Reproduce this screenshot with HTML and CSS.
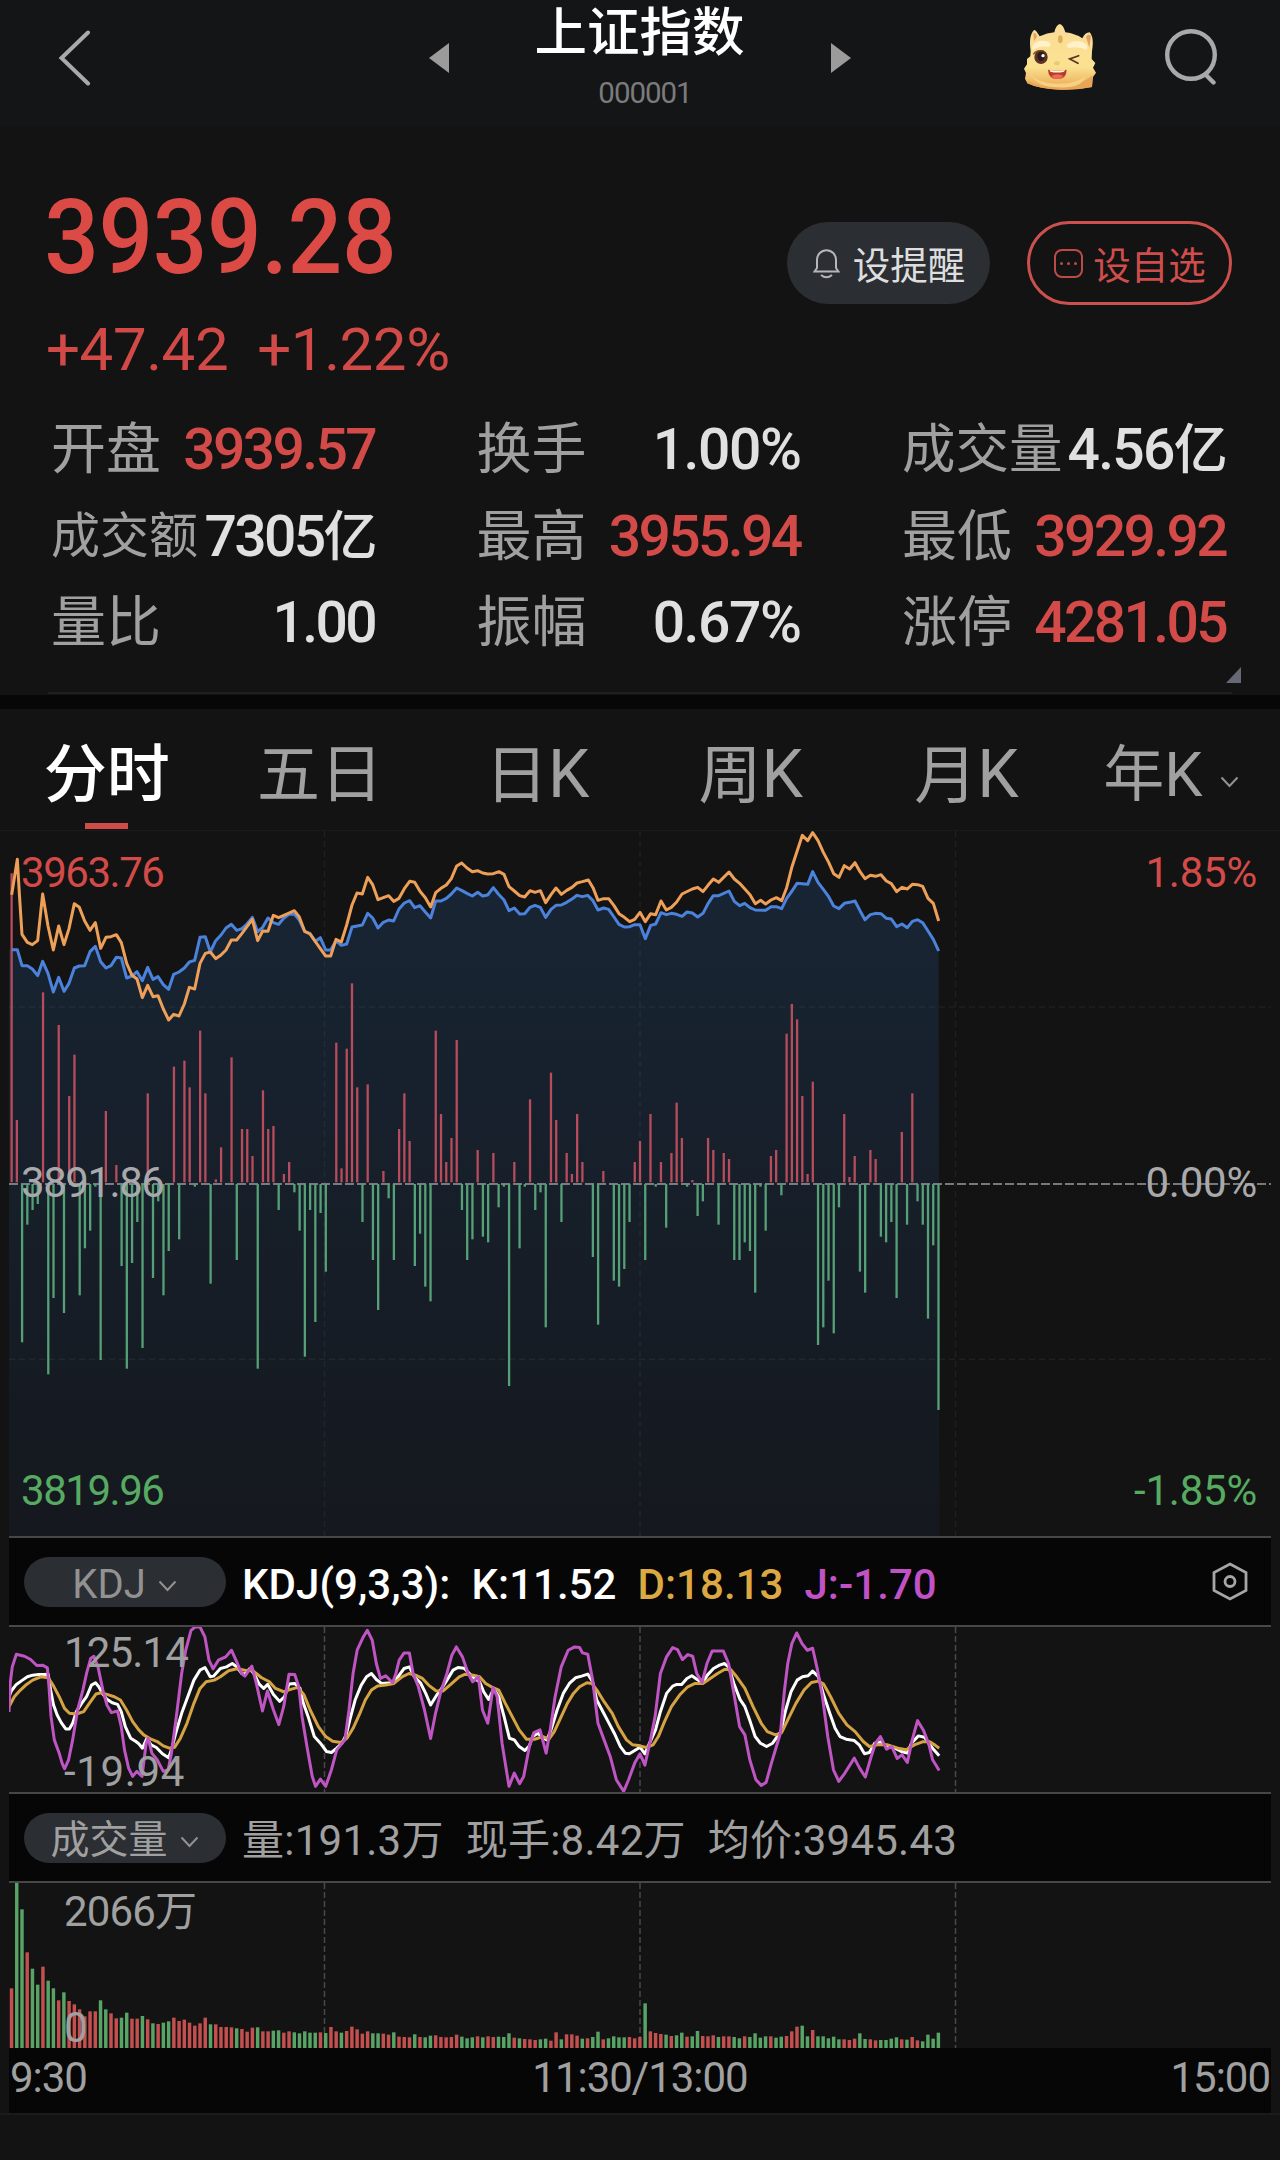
FILE: index.html
```html
<!DOCTYPE html>
<html lang="zh-CN">
<head>
  <meta charset="UTF-8">
  <title>上证指数</title>
  <meta name="viewport" content="width=device-width, initial-scale=1.0">
  <link rel="stylesheet" href="styles.css">
</head>
<body>

<!-- Header -->
<header class="header">
  <svg class="back" width="33" height="56" viewBox="0 0 33 56"><path d="M30 2.500L3.500 28L30 53.500"/></svg>
  <div class="stock">
    <svg width="20" height="30" viewBox="0 0 20 30"><path d="M20 0V30L0 15Z"/></svg>
    <div class="stock-name">
      <h1>上证指数</h1>
      <div class="code">000001</div>
    </div>
    <svg width="20" height="30" viewBox="0 0 20 30"><path d="M0 0V30L20 15Z"/></svg>
  </div>
  <div class="header-actions">
    <svg width="72" height="66" viewBox="72 69 216 198">
      <defs>
        <linearGradient id="face" x1="0" y1="0" x2="0" y2="1">
          <stop offset="0" stop-color="#f9dc98"/>
          <stop offset="0.65" stop-color="#fbe290"/>
          <stop offset="1" stop-color="#e8a552"/>
        </linearGradient>
      </defs>
      <path fill="url(#face)" d="M92 150Q86 110 98 92Q103 82 110 92L119 106Q142 95 163 94Q168 71 180 69Q190 72 196 94Q226 98 247 112Q255 94 269 94Q283 110 276 150L275 174L286 186L279 200L288 215L279 228L276 258Q230 268 180 266Q120 265 82 247L75 233L78 216L72 203L81 190L81 174L91 166Z"/>
      <path fill="#e9a556" d="M82 238Q120 262 175 256Q245 255 277 222L276 258Q230 268 180 266Q120 265 82 247Z"/>
      <path fill="#f7d183" d="M90 219Q118 250 174 248Q235 248 259 221Q250 262 174 259Q112 259 90 219Z"/>
      <path fill="#dfa168" d="M100 98Q107 92 111 107L102 120ZM258 108Q266 94 273 106L268 140Z"/>
      <ellipse cx="181" cy="115" rx="7" ry="12" fill="#dcae59"/>
      <path fill="#fff1c9" d="M96 137Q111 112 146 122Q157 132 147 138Q115 133 98 149ZM203 129Q227 113 253 126Q267 135 260 147Q234 134 207 141Q198 137 203 129Z"/>
      <ellipse cx="123" cy="168" rx="20" ry="21" fill="#5b3324"/>
      <ellipse cx="123" cy="166" rx="11" ry="14" fill="#2a1a18"/>
      <path d="M100 160Q110 145 130 150" fill="none" stroke="#7a4a2c" stroke-width="4"/>
      <circle cx="129" cy="164" r="5" fill="#fff"/>
      <ellipse cx="171" cy="187" rx="9" ry="6" fill="#edc875"/>
      <path d="M236 164L209 174L234 187" fill="none" stroke="#55311f" stroke-width="5" stroke-linecap="round"/>
      <path fill="#b93a2c" d="M144 206Q172 212 200 206Q200 234 172 234Q145 234 144 206Z"/>
      <path fill="#ee6b50" d="M154 225Q172 214 190 225Q184 234 172 234Q160 234 154 225Z"/>
      <path fill="#fff3e2" d="M149 207Q172 212 195 207L192 212Q172 217 151 212Z"/>
    </svg>
    <svg class="search" width="52" height="56" viewBox="0 0 52 56"><circle cx="26" cy="26" r="23.800"/><path d="M41 46L48.500 53.500"/></svg>
  </div>
</header>

<!-- Quote -->
<section class="quote">
  <div class="quote-top">
    <div>
      <div class="price">3939.28</div>
      <div class="change"><span>+47.42</span><span>+1.22%</span></div>
    </div>
    <div class="quote-buttons">
      <button class="pill-button">
        <svg width="27" height="31" viewBox="0 0 27 31"><path d="M1.500 23.500H25.500L23 20V12A9.500 9.800 0 0 0 4 12V20Z"/><path d="M8 27Q13.500 31.500 19 27"/></svg>
        设提醒
      </button>
      <button class="pill-button outlined">
        <svg width="29" height="29" viewBox="0 0 29 29"><rect x="1" y="1" width="27" height="27" rx="7"/><path class="dots" d="M7.500 14.500h.01M14.500 14.500h.01M21.500 14.500h.01"/></svg>
        设自选
      </button>
    </div>
  </div>

  <div class="stats">
    <div class="stat"><span class="label">开盘</span><span class="value up">3939.57</span></div>
    <div class="stat"><span class="label">换手</span><span class="value percent">1.00%</span></div>
    <div class="stat"><span class="label medium">成交量</span><span class="value amount">4.56<i>亿</i></span></div>
    <div class="stat"><span class="label small">成交额</span><span class="value">7305<i>亿</i></span></div>
    <div class="stat"><span class="label">最高</span><span class="value up">3955.94</span></div>
    <div class="stat"><span class="label">最低</span><span class="value up">3929.92</span></div>
    <div class="stat"><span class="label">量比</span><span class="value">1.00</span></div>
    <div class="stat"><span class="label">振幅</span><span class="value percent">0.67%</span></div>
    <div class="stat"><span class="label">涨停</span><span class="value up">4281.05</span></div>
  </div>
  <div class="expand"><svg width="15" height="16" viewBox="0 0 15 16"><path d="M15 0V16H0Z"/></svg></div>
</section>

<!-- Period tabs -->
<nav class="tabs">
  <div class="tab active">分时</div>
  <div class="tab">五日</div>
  <div class="tab day">日<b>K</b></div>
  <div class="tab day">周<b>K</b></div>
  <div class="tab month">月<b>K</b></div>
  <div class="tab last">年<b>K</b><svg class="caret" width="19" height="12" viewBox="0 0 19 12"><path d="M1.500 1.500L9.500 10L17.500 1.500"/></svg></div>
</nav>

<main class="charts">
  <!-- Intraday chart -->
  <div class="chart chart-price">
    <svg id="priceChart" viewBox="27 33 3786 2115" preserveAspectRatio="none"></svg>
    <span class="mark top left up">3963.76</span>
    <span class="mark top right up">1.85%</span>
    <span class="mark middle left">3891.86</span>
    <span class="mark middle right">0.00%</span>
    <span class="mark bottom left down">3819.96</span>
    <span class="mark bottom right down">-1.85%</span>
  </div>

  <!-- KDJ -->
  <div class="bar">
    <div class="selector">KDJ <svg class="caret" width="19" height="12" viewBox="0 0 19 12"><path d="M1.500 1.500L9.500 10L17.500 1.500"/></svg></div>
    <div class="readout kdj">
      <span>KDJ(9,3,3):</span><span>K:11.52</span><span class="gold">D:18.13</span><span class="pink">J:-1.70</span>
    </div>
    <svg class="settings" width="36" height="39" viewBox="0 0 36 39"><path d="M18 2L34 10.500V28.500L18 37L2 28.500V10.500Z"/><circle cx="18" cy="19.500" r="5"/></svg>
  </div>
  <div class="chart chart-sub">
    <svg id="kdjChart" viewBox="22 290 3092 497" preserveAspectRatio="none"></svg>
    <span class="mark sub-top">125.14</span>
    <span class="mark sub-bottom">-19.94</span>
  </div>

  <!-- Volume -->
  <div class="bar">
    <div class="selector volume">成交量 <svg class="caret" width="19" height="12" viewBox="0 0 19 12"><path d="M1.500 1.500L9.500 10L17.500 1.500"/></svg></div>
    <div class="readout volume">
      <span>量:191.3万</span><span>现手:8.42万</span><span>均价:3945.43</span>
    </div>
  </div>
  <div class="chart chart-sub">
    <svg id="volumeChart" viewBox="0 0 241 495" preserveAspectRatio="none"></svg>
    <span class="mark sub-top volume">2066万</span>
    <span class="mark sub-bottom">0</span>
  </div>
  <div class="axis"><span>9:30</span><span>11:30/13:00</span><span>15:00</span></div>
</main>
<footer class="footer"></footer>

<script src="charts.js"></script>
</body>
</html>
```

FILE: styles.css
```css
* {
  box-sizing: border-box;
}

body {
  margin: 0;
  width: 1280px;
  background: #131313;
  color: #a0a0a0;
  font-family: Roboto, "Noto Sans CJK SC", sans-serif;
}

svg {
  display: block;
  fill: none;
}

/* header */
.header {
  height: 126px;
  padding: 0 63px 11px 58px;
  background: #141517;
  display: grid;
  grid-template-columns: 1fr 423px 1fr;
  align-items: center;
}

.back {
  stroke: #a8a9ab;
  stroke-width: 4;
  stroke-linecap: round;
}

.stock {
  display: flex;
  justify-content: space-between;
  align-items: center;
  margin: 0 -2px 0 3px;
}

.stock svg {
  fill: #9b9b9b;
}

.stock-name {
  height: 115px;
  padding-top: 3px;
  text-align: center;
}

h1 {
  margin: 0 1px 0 0;
  font-size: 52.5px;
  line-height: 60px;
  font-weight: 500;
  color: #fff;
}

.code {
  margin-top: 15px;
  padding-left: 10px;
  font-size: 29.5px;
  line-height: 30px;
  letter-spacing: -0.035em;
  color: #7b7b7b;
}

.header-actions {
  display: flex;
  justify-content: flex-end;
  align-items: center;
  gap: 69px;
  padding-bottom: 1px;
}

.search {
  stroke: #a8a9ab;
  stroke-width: 4.4;
  stroke-linecap: round;
}

/* quote */
.quote {
  padding: 62px 48px 0 44px;
  height: 569px;
}

.quote-top {
  display: flex;
  justify-content: space-between;
}

.price {
  font-size: 103px;
  line-height: 100px;
  font-weight: 500;
  letter-spacing: -0.5px;
  color: #dc4a46;
  transform: scaleX(0.935);
  transform-origin: 4px 0;
}

.change {
  display: flex;
  gap: 29px;
  margin: 22px 0 0 2px;
  font-size: 60px;
  line-height: 80px;
  letter-spacing: -0.007em;
  color: #d24a47;
}

.quote-buttons {
  display: flex;
  gap: 36px;
  padding-top: 33px;
}

.pill-button {
  width: 205px;
  height: 84px;
  padding: 0 0 2px 1px;
  border: 1px solid #131313;
  border-radius: 42px;
  background: #2b2e33;
  color: #dedede;
  font: inherit;
  font-size: 37.5px;
  display: flex;
  justify-content: center;
  align-items: center;
  gap: 13px;
}

.pill-button svg {
  margin-top: 3px;
  stroke: #b5b6b8;
  stroke-width: 2;
}

.pill-button.outlined {
  background: none;
  border: 3px solid #cb504e;
  color: #cf4d4a;
  gap: 10px;
}

.pill-button.outlined svg {
  stroke: #bd4a48;
}

.pill-button .dots {
  stroke-width: 3;
  stroke-linecap: round;
}

.stats {
  display: grid;
  grid-template-columns: repeat(3, 324px);
  column-gap: 101.5px;
  margin: 17px 0 0 7px;
}

.stat {
  display: flex;
  justify-content: space-between;
  height: 86.5px;
  line-height: 85px;
  white-space: nowrap;
}

.label {
  font-size: 55px;
}

.label.medium {
  font-size: 53.5px;
}

.label.small {
  font-size: 49px;
}

.value {
  font-size: 57px;
  font-weight: 500;
  letter-spacing: -0.046em;
  color: #e0e0e0;
}

.value.percent {
  letter-spacing: -0.025em;
}

.value.amount {
  letter-spacing: -0.03em;
}

.value i {
  font-size: 54px;
  font-style: normal;
}

.up,
.value.up {
  color: #d24b49;
}

.down {
  color: #56aa61;
}

.expand {
  padding-bottom: 9px;
  margin-left: 4px;
  border-bottom: 2px solid #1f1f1f;
}

.expand svg {
  margin: 0 -9px 0 auto;
  fill: #666975;
}

/* tabs */
.tabs {
  display: flex;
  height: 136px;
  border-top: 14px solid #070707;
  border-bottom: 1px solid #1b1b1b;
}

.tab {
  width: 16.6667%;
  position: relative;
  padding-top: 26px;
  text-align: center;
  font-size: 63px;
  line-height: 80px;
}

.tab b {
  font-size: 66px;
  font-weight: 400;
}

.tab.active {
  color: #fff;
  font-weight: 500;
}

.tab.active::after {
  content: "";
  position: absolute;
  left: 85px;
  bottom: 1px;
  width: 43px;
  height: 6px;
  background: #cf4d49;
}

.tab.day {
  padding-left: 8px;
}

.tab.month {
  padding-left: 13px;
}

.tab.last {
  display: flex;
  justify-content: center;
  align-items: center;
  height: 121px;
  padding: 11px 4px 0 0;
  font-size: 61px;
}

.tab.last b {
  font-size: 61px;
}

.tab.last .caret {
  margin: 14px 0 0 18px;
}

.caret {
  stroke: #929292;
  stroke-width: 2;
}

/* charts */
.charts {
  margin: 0 9px;
}

.chart {
  position: relative;
}

.chart svg {
  width: 100%;
  height: 100%;
}

.chart svg * {
  vector-effect: non-scaling-stroke;
}

.chart-price {
  height: 705px;
}

.chart-sub {
  height: 165px;
}

.mark {
  position: absolute;
  font-size: 42px;
  line-height: 50px;
  letter-spacing: -0.035em;
}

.mark.left { left: 12px; }
.mark.right { right: 14px; letter-spacing: -0.005em; }
.mark.top { top: 17px; }
.mark.middle { top: 327px; }
.mark.bottom { bottom: 20px; }
.mark.middle { color: #a9a9ab; }
.mark.sub-top { left: 55px; top: 1px; letter-spacing: -0.02em; }
.mark.sub-top.volume { top: 4px; }
.mark.sub-bottom { left: 55px; bottom: -5px; letter-spacing: 0.015em; }

.bar {
  height: 91px;
  padding: 0 23px 0 15px;
  background: #060606;
  border: solid #474747;
  border-width: 2px 0;
  display: flex;
  align-items: center;
}

.selector {
  width: 202px;
  height: 50px;
  padding: 5px 1px 0 0;
  border-radius: 25px;
  background: #2b2e33;
  font-size: 40px;
  line-height: 45px;
  display: flex;
  justify-content: center;
  align-items: center;
  gap: 12px;
  color: #929292;
}

.selector .caret {
  margin-top: 3px;
}

.selector.volume {
  font-size: 39px;
  color: #a0a0a0;
}

.readout {
  display: flex;
  margin-left: 16px;
  padding-top: 6px;
  font-size: 42px;
  line-height: 50px;
  letter-spacing: 0.006em;
  white-space: nowrap;
}

.readout.kdj {
  gap: 21px;
  font-weight: 500;
  letter-spacing: 0.001em;
  color: #fff;
}

.readout.volume {
  gap: 22px;
}

.readout .gold { color: #dca844; }
.readout .pink { color: #c152c5; }

.settings {
  margin-left: auto;
  stroke: #a6a6a6;
  stroke-width: 2.8;
}

.axis {
  display: grid;
  grid-template-columns: 1fr auto 1fr;
  height: 65px;
  padding: 5px 1px 0 1px;
  background: #060606;
  font-size: 42px;
  line-height: 50px;
  letter-spacing: -0.024em;
}

.axis span:last-child {
  text-align: right;
}

.footer {
  height: 47px;
  border-top: 2px solid #1b1b1b;
}

/* chart drawing */
.grid {
  stroke: #ffffff;
  stroke-opacity: 0.05;
  stroke-width: 1.5;
  stroke-dasharray: 6 4;
}

.grid.strong {
  stroke: #484848;
  stroke-opacity: 1;
  stroke-dasharray: 6 3;
}

.zero-line {
  stroke: #9a9a9f;
  stroke-width: 1.5;
  stroke-dasharray: 9 3;
}

.line {
  stroke-width: 3;
  stroke-linejoin: round;
}

.line.index { stroke: #4b82dc; }
.line.average { stroke: #ee9f58; }
.line.k { stroke: #ffffff; }
.line.d { stroke: #d6a343; }
.line.j { stroke: #be55c3; }

.tick {
  stroke-width: 2.3;
}

.tick.red { stroke: #b74c5c; }
.tick.green { stroke: #56a077; }

.vol-red { fill: #c44f4f; }
.vol-green { fill: #58a466; }
```

FILE: charts.js
```js
const SLOTS = 241; // trading minutes in a session

// index and average price lines
const indexLine = "35,389 52,389 66,437 82,437 97,447 113,467 128,424 144,460 160,516 176,472 192,514 207,490 223,444 238,438 254,437 270,395 286,379 302,425 318,444 333,437 349,412 364,414 380,474 396,468 411,455 427,482 443,442 459,478 474,470 490,494 506,508 521,463 537,456 553,444 568,426 584,421 600,352 616,350 631,396 647,362 663,345 678,324 694,313 710,331 726,326 741,312 757,292 773,335 788,322 804,294 820,308 836,313 851,295 867,283 883,282 898,300 914,334 930,340 946,364 961,353 977,390 992,390 1008,362 1024,376 1040,372 1056,321 1087,315 1103,280 1118,294 1134,324 1150,307 1166,300 1181,303 1197,267 1213,249 1229,242 1244,263 1260,257 1276,276 1292,294 1307,243 1323,243 1339,235 1354,222 1370,204 1386,212 1401,220 1417,228 1433,217 1448,228 1463,225 1480,203 1495,222 1512,240 1527,272 1543,264 1559,282 1574,281 1590,262 1605,256 1621,262 1637,292 1653,268 1668,256 1684,255 1700,247 1716,237 1731,226 1747,230 1763,226 1779,242 1794,270 1811,264 1826,268 1842,291 1857,313 1873,321 1889,320 1904,314 1920,314 1936,356 1952,316 1967,312 1983,278 1999,284 2014,280 2030,283 2046,289 2061,276 2077,279 2093,291 2109,280 2124,251 2140,227 2156,227 2187,213 2203,244 2219,257 2234,250 2250,263 2266,270 2297,271 2313,260 2329,260 2345,266 2360,235 2376,213 2391,190 2423,193 2438,155 2454,187 2470,208 2486,230 2501,258 2517,266 2533,250 2549,247 2565,243 2580,272 2595,299 2611,284 2627,280 2643,281 2659,295 2674,297 2690,320 2706,312 2722,323 2737,304 2753,299 2768,308 2784,333 2800,358 2816,393";
const averageLine = "35,224 52,118 58,220 66,343 82,367 97,374 113,362 128,222 144,318 160,390 176,318 192,374 207,326 223,251 238,262 254,303 270,331 286,308 302,385 318,352 333,350 349,344 364,368 380,430 396,466 411,477 427,533 443,496 459,530 474,527 490,567 506,600 521,583 537,588 553,552 568,502 584,507 600,430 616,400 631,396 647,416 663,405 678,390 694,360 710,360 726,340 757,298 773,362 788,333 804,334 820,286 836,293 867,279 883,272 898,291 914,334 930,342 961,386 977,408 992,408 1008,358 1024,366 1040,315 1056,255 1071,219 1087,222 1103,172 1118,194 1134,239 1166,227 1181,244 1197,235 1213,206 1229,184 1244,187 1260,214 1276,233 1292,261 1307,218 1323,205 1339,195 1354,176 1370,138 1385,129 1401,144 1417,155 1433,152 1448,159 1463,162 1480,161 1497,155 1512,163 1527,200 1543,213 1559,227 1574,231 1590,212 1605,217 1621,212 1637,248 1653,224 1668,204 1684,223 1700,211 1716,202 1731,189 1747,185 1765,180 1779,203 1794,241 1811,236 1826,236 1842,257 1857,281 1873,292 1889,305 1904,298 1920,277 1936,305 1952,281 1967,284 1983,243 1999,270 2014,262 2030,246 2046,222 2077,207 2093,202 2109,215 2124,196 2140,177 2156,187 2187,156 2203,177 2219,190 2250,224 2266,251 2282,241 2297,252 2313,240 2329,233 2345,242 2360,203 2376,140 2407,46 2423,62 2438,38 2454,62 2470,97 2486,127 2501,161 2517,172 2533,137 2549,147 2565,128 2580,155 2595,176 2611,166 2627,169 2643,164 2659,183 2674,191 2690,215 2706,202 2722,207 2737,193 2753,194 2768,199 2784,235 2800,250 2816,303";

// momentum ticks, minute: end of the bar above or below the zero line
const ZERO = 1092;
const ticksUp = {
  0: 160, 1: 900, 6: 517, 9: 615, 11: 828, 12: 704, 18: 873, 20: 1035, 26: 820, 31: 740,
  33: 722, 34: 802, 36: 632, 37: 820, 39: 1078, 40: 982, 42: 712, 44: 927, 45: 927, 46: 1008,
  48: 811, 49: 927, 50: 918, 52: 1062, 53: 1026, 62: 668, 63: 1045, 64: 686, 65: 490, 66: 802,
  68: 793, 71: 1053, 74: 927, 75: 820, 76: 963, 81: 632, 82: 882, 83: 1026, 84: 954, 85: 660,
  89: 990, 92: 999, 96: 1026, 99: 838, 103: 758, 104: 900, 106: 999, 107: 1062, 108: 882, 109: 1026,
  113: 1053, 119: 1026, 120: 963, 122: 882, 124: 1026, 126: 999, 127: 848, 128: 954, 130: 1080, 133: 954,
  134: 990, 136: 999, 137: 1017, 145: 1008, 146: 990, 148: 641, 149: 552, 150: 598, 151: 828, 152: 1062,
  153: 785, 159: 882, 160: 1071, 161: 1008, 164: 990, 165: 1017, 170: 936, 172: 820
};
const ticksDown = {
  2: 1567, 3: 1214, 4: 1170, 5: 1152, 7: 1663, 8: 1434, 10: 1479, 13: 1426, 14: 1285, 15: 1232,
  16: 1100, 17: 1620, 21: 1338, 22: 1646, 23: 1329, 24: 1206, 25: 1584, 27: 1374, 28: 1144, 29: 1426,
  30: 1293, 32: 1258, 35: 1100, 38: 1391, 43: 1320, 47: 1646, 51: 1170, 54: 1117, 55: 1232, 56: 1610,
  57: 1170, 58: 1506, 59: 1179, 60: 1355, 67: 1206, 69: 1320, 70: 1470, 72: 1135, 73: 1320, 77: 1338,
  78: 1241, 79: 1400, 80: 1444, 86: 1170, 87: 1320, 88: 1258, 90: 1250, 91: 1267, 93: 1162, 94: 1100,
  95: 1698, 97: 1285, 98: 1100, 100: 1170, 101: 1117, 102: 1522, 105: 1206, 111: 1311, 112: 1514, 115: 1382,
  116: 1400, 117: 1347, 118: 1206, 121: 1320, 123: 1100, 125: 1223, 129: 1100, 131: 1188, 132: 1144, 135: 1214,
  138: 1320, 139: 1320, 140: 1267, 141: 1293, 142: 1418, 143: 1100, 144: 1232, 147: 1126, 154: 1575, 155: 1522,
  156: 1382, 157: 1540, 158: 1162, 162: 1355, 163: 1418, 166: 1250, 167: 1267, 168: 1206, 169: 1434, 171: 1214,
  173: 1144, 174: 1214, 175: 1496, 176: 1276, 177: 1770
};

// KDJ lines
const kLine = "22,500 28,482 40,463 55,450 67,440 80,435 95,433 107,433 118,432 124,480 131,524 140,555 150,578 161,597 170,597 178,580 187,545 200,520 212,500 224,465 234,458 242,470 252,492 262,508 275,518 288,523 297,545 307,590 320,625 333,635 341,643 349,655 360,625 370,645 383,653 398,672 413,684 420,660 430,612 445,550 460,500 475,450 490,420 502,412 515,440 523,438 540,415 555,410 569,400 580,410 592,430 600,432 612,415 622,430 635,462 646,475 656,463 670,493 685,514 697,500 708,462 722,460 735,475 742,515 755,560 770,620 785,640 800,665 812,668 825,655 838,640 848,615 858,565 870,510 885,465 898,440 910,430 922,448 935,460 960,458 975,440 990,415 1003,410 1015,440 1030,458 1043,490 1055,525 1070,495 1082,475 1095,450 1110,420 1122,412 1137,414 1150,430 1162,445 1175,455 1185,485 1197,508 1210,475 1222,500 1235,560 1248,625 1260,630 1272,650 1286,662 1297,648 1305,620 1318,610 1330,625 1340,630 1350,600 1365,540 1380,490 1395,460 1410,443 1425,438 1440,432 1452,455 1462,510 1475,540 1490,575 1505,610 1520,650 1532,670 1542,672 1555,662 1568,652 1580,672 1593,635 1606,600 1618,545 1633,490 1648,468 1658,463 1670,463 1683,445 1695,437 1708,448 1721,458 1733,435 1748,415 1763,405 1775,400 1786,412 1798,460 1813,508 1825,530 1838,575 1850,620 1863,640 1878,650 1893,640 1913,605 1925,540 1938,485 1953,450 1966,440 1980,437 1991,423 2005,440 2018,495 2033,550 2046,595 2058,620 2073,628 2093,632 2105,645 2118,672 2130,668 2143,640 2158,636 2173,650 2188,652 2208,665 2223,670 2233,640 2250,618 2265,622 2275,640 2288,660 2301,678";
const dLine = "22,530 35,500 50,480 65,463 80,450 100,440 118,443 130,465 145,500 158,535 170,550 187,552 205,545 220,518 235,492 248,488 262,493 280,500 295,510 310,540 325,575 340,600 352,615 370,628 385,635 400,648 415,655 428,652 442,625 458,580 475,520 490,475 505,455 525,450 540,440 560,422 580,416 600,420 620,422 640,442 660,455 675,475 695,485 712,478 730,472 745,495 760,540 780,590 798,620 815,634 835,638 850,625 865,595 880,555 895,510 910,480 925,468 945,465 965,460 985,440 1002,430 1018,435 1035,445 1050,465 1068,482 1085,483 1105,462 1125,440 1140,432 1160,435 1175,440 1190,460 1208,473 1222,480 1238,520 1255,560 1272,600 1290,628 1310,628 1330,620 1345,628 1358,605 1375,560 1390,520 1405,490 1420,470 1438,458 1450,460 1465,485 1480,515 1500,550 1515,590 1535,630 1550,645 1568,648 1583,653 1600,645 1613,620 1628,575 1645,530 1665,495 1685,470 1703,460 1722,460 1740,445 1758,430 1775,418 1790,418 1805,440 1825,475 1845,530 1865,580 1880,605 1900,615 1915,608 1930,570 1950,520 1970,480 1988,457 2005,453 2018,462 2035,500 2055,550 2075,585 2095,605 2115,635 2130,650 2150,645 2175,645 2200,655 2220,660 2240,645 2260,636 2278,636 2290,645 2301,655";
const jLine = "22,546 25,460 30,410 40,372 60,378 75,388 90,406 105,405 116,413 120,470 125,560 133,630 145,670 152,700 158,717 168,690 178,630 190,540 203,480 212,430 222,385 230,378 240,410 252,480 262,525 273,548 288,543 297,590 305,660 315,715 325,740 335,725 348,740 358,640 363,625 372,670 385,690 400,725 412,720 420,670 432,560 445,430 455,360 468,300 478,290 490,290 502,320 512,390 522,416 535,390 553,380 567,360 578,390 592,430 600,438 617,408 628,460 643,543 655,483 670,540 683,584 695,530 708,432 722,433 732,470 740,560 752,650 765,740 773,770 785,748 798,770 812,720 825,660 845,630 855,540 865,430 875,360 890,320 900,300 912,330 922,400 932,445 945,437 962,458 970,430 978,390 990,368 1003,368 1012,430 1025,470 1040,540 1055,626 1067,550 1080,485 1095,430 1107,375 1118,350 1133,380 1147,430 1158,455 1172,440 1182,540 1195,580 1208,472 1218,500 1230,640 1247,770 1260,730 1273,762 1283,740 1297,650 1308,608 1323,600 1338,670 1348,600 1360,500 1375,410 1392,360 1408,350 1420,352 1427,368 1440,372 1452,450 1465,580 1480,630 1495,680 1510,750 1528,785 1540,750 1555,700 1568,672 1580,706 1592,640 1605,560 1618,430 1633,380 1648,352 1660,358 1672,388 1685,373 1697,378 1707,430 1720,457 1732,400 1745,362 1772,362 1785,400 1798,490 1812,590 1825,615 1837,690 1852,750 1865,767 1877,758 1890,700 1912,610 1922,480 1930,400 1940,340 1952,308 1965,340 1978,360 1991,354 2003,420 2015,500 2028,620 2042,720 2055,755 2070,730 2093,685 2106,715 2120,742 2132,690 2145,640 2157,620 2172,658 2185,650 2198,686 2210,675 2223,698 2235,630 2248,572 2262,600 2275,640 2285,690 2301,722";

// volume per minute, positive = rising, negative = falling
const volumes = [
  179, -495, -416, 287, -238, -190, 244, -202, -179, 143, -167, 141, 131, 116, 95, 110, 110, -143, -116, 104,
  89, -91, -106, 88, 88, -96, 86, -74, 72, -76, -80, 91, 81, 85, 76, 67, 74, 91, -71, 71,
  63, 63, 62, -59, 57, 49, 61, -62, 50, 50, -52, -53, 46, 50, -47, -44, -50, -46, -46, 47,
  -45, 63, 50, -46, 51, 64, 56, 43, 50, -44, -44, 43, 40, -47, 34, 33, 32, -41, 33, -32,
  -37, 38, 33, 32, 33, 40, -34, -29, -32, 35, -32, 35, 33, -34, -33, -44, 31, -29, 27, 26,
  24, -26, -28, 22, 47, -26, 41, 41, 37, -28, 29, -33, -49, 26, -29, -35, -32, -32, 33, 29,
  33, -134, 50, 45, 42, -40, 36, -38, -46, 34, -35, -51, 36, 35, 38, -33, 35, 35, -33, -29,
  35, -33, -44, -31, -35, 35, -31, -34, 36, 50, 64, -67, -35, 54, -35, -35, -29, -34, -26, 26,
  24, 28, -44, -27, 26, 23, -24, -24, -28, -32, 26, -25, 33, 23, -20, -40, -28, -46
];

function vertical(width, left, top, bottom, cls) {
  return [0.25, 0.5, 0.75].map(f => {
    const x = left + width * f;
    return `<path class="${cls}" d="M${x} ${top}V${bottom}"/>`;
  }).join('');
}

function drawPrice() {
  const x = i => 27 + 3786 / SLOTS * (i + 0.5);
  const ticks = (data, cls, base) => Object.keys(data).map(i =>
    `<path class="tick ${cls}" d="M${x(+i)} ${base}V${data[i]}"/>`).join('');

  document.getElementById('priceChart').innerHTML = `
    <defs>
      <linearGradient id="area" x1="0" y1="0" x2="0" y2="1">
        <stop offset="0" stop-color="#182534"/>
        <stop offset="1" stop-color="#15181e"/>
      </linearGradient>
    </defs>
    <polygon fill="url(#area)" points="27,389 ${indexLine} 2818,2148 27,2148"/>
    ${vertical(3786, 27, 33, 2148, 'grid')}
    <path class="grid" d="M27 561H3813"/>
    <path class="grid" d="M27 1618H3813"/>
    <path class="zero-line" d="M27 ${ZERO}H3813"/>
    ${ticks(ticksUp, 'red', ZERO - 5)}
    ${ticks(ticksDown, 'green', ZERO)}
    <polyline class="line index" points="${indexLine}"/>
    <polyline class="line average" points="${averageLine}"/>`;
}

function drawKdj() {
  document.getElementById('kdjChart').innerHTML = `
    ${vertical(3092, 22, 290, 787, 'grid strong')}
    <polyline class="line k" points="${kLine}"/>
    <polyline class="line d" points="${dLine}"/>
    <polyline class="line j" points="${jLine}"/>`;
}

function drawVolume() {
  document.getElementById('volumeChart').innerHTML =
    vertical(SLOTS, 0, 0, 495, 'grid strong') +
    volumes.map((v, i) => {
      const h = Math.abs(v);
      return `<rect class="${v > 0 ? 'vol-red' : 'vol-green'}" x="${i + 0.15}" y="${495 - h}" width="0.66" height="${h}"/>`;
    }).join('');
}

drawPrice();
drawKdj();
drawVolume();
```
